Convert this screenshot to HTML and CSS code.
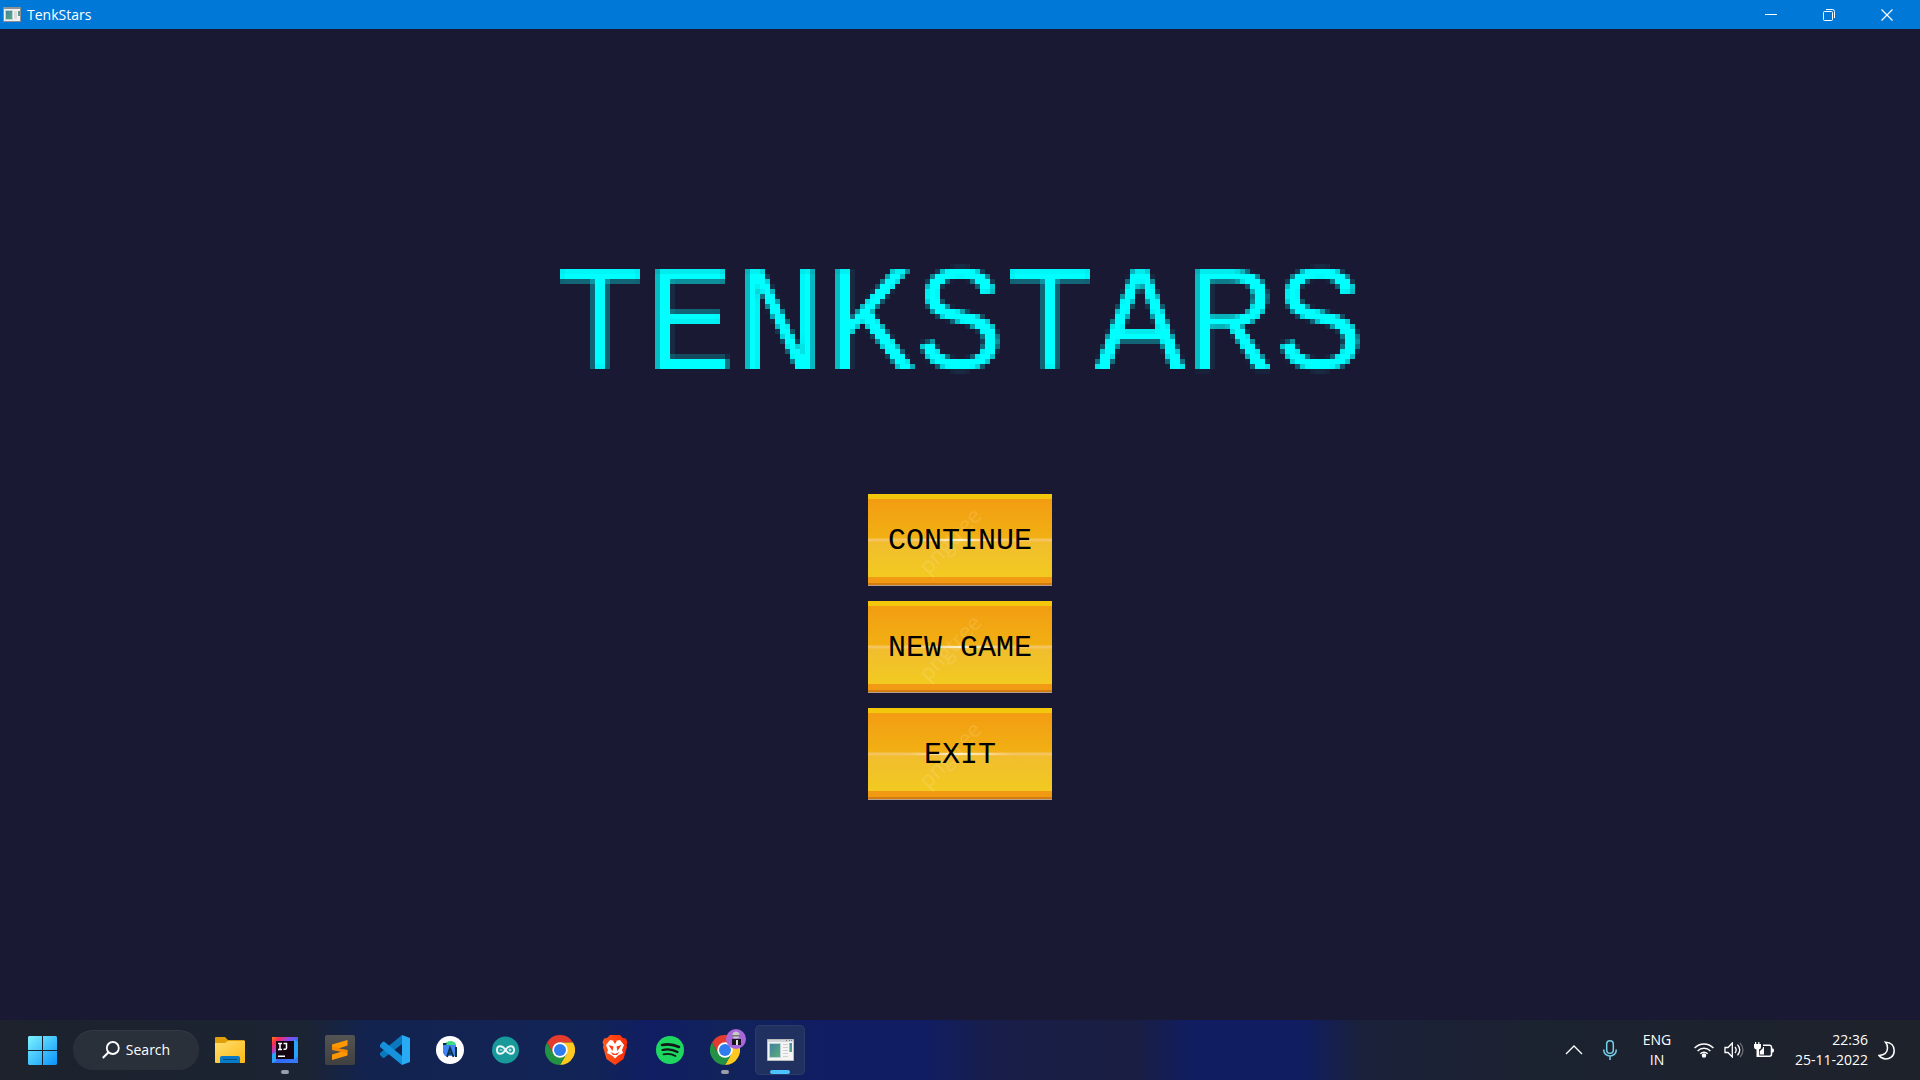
FILE: index.html
```html
<!DOCTYPE html>
<html lang="en">
<head>
<meta charset="utf-8">
<title>TenkStars</title>
<link rel="stylesheet" href="styles.css">
</head>
<body>
<svg class="defs" aria-hidden="true">
  <defs>
    <!-- Samples the title every 5px and grows each sample into a block -->
    <filter id="pixels" filterUnits="userSpaceOnUse" x="0" y="0" width="820" height="160" color-interpolation-filters="sRGB">
      <feGaussianBlur in="SourceGraphic" stdDeviation="1" result="soft"/>
      <feFlood x="2" y="2" width="1" height="1" flood-color="#000"/>
      <feComposite x="0" y="0" width="5" height="5" in2="SourceGraphic" operator="over"/>
      <feTile result="grid"/>
      <feComposite in="soft" in2="grid" operator="in"/>
      <feMorphology operator="dilate" radius="2"/>
    </filter>
    <linearGradient id="win" x1="0" y1="0" x2="1" y2="1"><stop offset="0" stop-color="#7df3ff"/><stop offset="1" stop-color="#0a93fb"/></linearGradient>
    <linearGradient id="fold" x1="0" y1="0" x2="1" y2="1"><stop offset="0" stop-color="#ffdf70"/><stop offset="1" stop-color="#fdb813"/></linearGradient>
    <linearGradient id="ij" x1="0" y1="0" x2="1" y2="1"><stop offset="0" stop-color="#f97a12"/><stop offset=".16" stop-color="#fe2857"/><stop offset=".36" stop-color="#8a4cf0"/><stop offset=".6" stop-color="#2f6bf5"/><stop offset="1" stop-color="#3b7cf8"/></linearGradient>
    <linearGradient id="subl" x1="0" y1="0" x2="0" y2="1"><stop offset="0" stop-color="#545454"/><stop offset="1" stop-color="#404040"/></linearGradient>
    <linearGradient id="brave" x1="0" y1="0" x2="1" y2="0"><stop offset="0" stop-color="#ff5a1f"/><stop offset="1" stop-color="#fb2a05"/></linearGradient>
    <linearGradient id="pane" x1="0" y1="0" x2="1" y2="1"><stop offset="0" stop-color="#3f7fa6"/><stop offset="1" stop-color="#5cae74"/></linearGradient>
    <symbol id="chrome" viewBox="0 0 30 30">
      <path fill="#e33b2e" d="M2 7.500A15 15 0 0 1 28 7.500H15L8.500 18.750Z"/>
      <path fill="#fdc921" d="M28 7.500A15 15 0 0 1 15 30L21.500 18.750L15 7.500Z"/>
      <path fill="#229342" d="M2 7.500A15 15 0 0 0 15 30L21.500 18.750H8.500Z"/>
      <circle cx="15" cy="15" r="7.700" fill="#fff"/><circle cx="15" cy="15" r="6" fill="#2f7bf0"/>
    </symbol>
    <symbol id="window" viewBox="0 0 27 22">
      <path fill="#f4f4f4" stroke="#b9bcbc" d="M.5.5h26v21H.5z"/>
      <path fill="#d3d6d8" d="M1 1h25v2H1z"/><path fill="#777" d="M19 1h1v1h-1zM22 1h1v1h-1zM24 1h1v1h-1z"/>
      <path fill="url(#pane)" stroke="#bcd3d5" d="M2.500 4.500h11v14h-11z"/>
      <path stroke="#cfcfcf" d="M16 5.500h5M16 8.500h5M16 11.500h5M16 14.500h5M16 17.500h5"/>
      <path fill="url(#pane)" d="M22.500 4H25v9h-2.500z"/>
    </symbol>
  </defs>
</svg>

<header class="titlebar">
  <svg class="titlebar-icon" viewBox="0 0 18 15" aria-hidden="true">
    <path fill="#f2f2f2" stroke="#898d8f" d="M.5.5h17v14H.5z"/><path fill="#8d9294" d="M1 0h16v2H1z"/>
    <path fill="url(#pane)" stroke="#bcd3d5" d="M2.500 3.500h7v9h-7z"/><path fill="#dcdcdc" d="M11 4h3v8h-3z"/><path fill="#5b9a8d" d="M15 4h2v5h-2z"/>
  </svg>
  <span class="titlebar-text">TenkStars</span>
  <div class="window-controls">
    <button aria-label="Minimize"><svg width="12" height="12" viewBox="0 0 12 12"><path stroke="#fff" d="M0 5.500h12"/></svg></button>
    <button aria-label="Restore"><svg width="12" height="12" viewBox="0 0 12 12" fill="none" stroke="#fff"><rect x=".5" y="2.500" width="9" height="9" rx="1"/><path d="M3 .500h6.500a2 2 0 0 1 2 2V9"/></svg></button>
    <button aria-label="Close"><svg width="12" height="12" viewBox="0 0 12 12"><path stroke="#fff" stroke-width="1.200" d="M.5.5l11 11M11.500.5l-11 11"/></svg></button>
  </div>
</header>

<main class="game">
  <h1 class="game-title">TENKSTARS</h1>
  <nav class="menu" aria-label="Main menu">
    <button class="menu-button"><span>CONTINUE</span></button>
    <button class="menu-button"><span>NEW GAME</span></button>
    <button class="menu-button"><span>EXIT</span></button>
  </nav>
</main>

<footer class="taskbar">
  <button class="task" aria-label="Start">
    <svg width="29" height="29" viewBox="0 0 29 29"><path fill="url(#win)" d="M1 0h13v14H0V1zM15 0h13l1 1v13H15zM0 15h14v14H1l-1-1zM15 15h14v13l-1 1H15z"/></svg>
  </button>
  <button class="search">
    <svg width="18" height="18" viewBox="0 0 18 18" fill="none" stroke="#fff" stroke-width="1.800"><circle cx="10.800" cy="7" r="6"/><path stroke-width="2" d="M6.500 11.300L.8 17"/></svg>
    <span>Search</span>
  </button>
  <div class="apps">
    <button class="task" aria-label="File Explorer">
      <svg width="30" height="30" viewBox="0 0 30 30"><path fill="#e0a009" d="M0 3a1 1 0 0 1 1-1h9l3 3h16l1 1v8H0z"/><path fill="url(#fold)" d="M0 8h10l3-2h17v21a1 1 0 0 1-1 1H1a1 1 0 0 1-1-1z"/><path fill="#087bc8" d="M5 28v-5a2 2 0 0 1 2-2h16a2 2 0 0 1 2 2v5z"/><path stroke="#064b80" d="M8 24.500h14"/></svg>
    </button>
    <button class="task running" aria-label="IntelliJ IDEA">
      <svg width="26" height="26" viewBox="0 0 26 26"><path fill="url(#ij)" d="M0 0h26v26H0z"/><path fill="#26a3f8" d="M22 2l4 3v14l-4 4zM0 17l4-2v9l-4 2z"/><path fill="#120511" d="M4 4h18v18H4z"/><path fill="none" stroke="#fff" stroke-width="1.500" d="M6 6.500h4M8 6.500v6M6 12.500h4M11.500 6.500h3V11q0 1.500-3 1.300M6 19.300h7"/></svg>
    </button>
    <button class="task" aria-label="Sublime Text">
      <svg width="30" height="30" viewBox="0 0 30 30"><rect width="30" height="30" rx="2" fill="url(#subl)"/><path fill="#ff9800" d="M22.500 5v5.500l-9 3L22.500 15v5.500L7 25v-5.500l9-2.700L7 15V9.500z"/><path fill="#ee7d00" d="M7 14.500v-3l15.500 4v3l-6.500-1.700z" opacity=".6"/></svg>
    </button>
    <button class="task" aria-label="Visual Studio Code">
      <svg width="30" height="30" viewBox="0 0 30 30"><path fill="#0b79be" d="M22 0v9L4 23l-1.500-.5L0 20v-2z"/><path fill="#1493dc" d="M0 10l2.500-3L4 6.500 22 21v9L0 12z"/><path fill="#29aaf4" d="M22 0l8 3v24l-8 3z"/></svg>
    </button>
    <button class="task" aria-label="Android Studio">
      <svg width="28" height="28" viewBox="0 0 28 28"><circle cx="14" cy="14" r="14" fill="#fff"/><path fill="#4285f4" d="M7 9h13v11H9L7 17z"/><path fill="#3ddc84" d="M9 9a5.500 4 0 0 1 11 0z"/><path fill="#073042" d="M7 7h4l-1 2H7zM19 11h2v10h-2z"/><path fill="none" stroke="#073042" stroke-width="1.800" d="M11 21l3-9 3.500 9M12 17.500h4"/></svg>
    </button>
    <button class="task" aria-label="Arduino IDE">
      <svg width="27" height="28" viewBox="0 0 27 28"><circle cx="13.500" cy="14" r="13.500" fill="#189a9b"/><path fill="none" stroke="#e7f6f6" stroke-width="2" d="M13.500 14c-3-5-8.500-5-8.500 0s5.500 5 8.500 0 8.500-5 8.500 0-5.500 5-8.500 0z"/><path stroke="#e7f6f6" d="M7.500 14h3M16.500 14h3M18 12.500v3"/></svg>
    </button>
    <button class="task" aria-label="Google Chrome"><svg width="30" height="30"><use href="#chrome"/></svg></button>
    <button class="task" aria-label="Brave">
      <svg width="26" height="30" viewBox="0 0 26 30"><path fill="url(#brave)" d="M8 0h10l3 3 3 .5 1.500 4L24.500 10 25 12l-3.500 12L13 30l-8.500-6L1 12l.5-2L.5 7.500 2 3.500 5 3z"/><path fill="#fff" d="M8 5l5 1 5-1 4 5-2 5 1 3-5 2.500-3 3-3-3L5 18l1-3-2-5z"/><path fill="#fc3c0d" d="M6.500 10l5 1.500-1 4.500zM19.500 10l-5 1.500 1 4.500zM11 5.800h4L13 9zM8.500 17l4.500 2 4.500-2-2.500 3h-4z"/></svg>
    </button>
    <button class="task" aria-label="Spotify">
      <svg width="28" height="28" viewBox="0 0 28 28"><circle cx="14" cy="14" r="14" fill="#1ed760"/><path fill="none" stroke="#11161a" stroke-linecap="round" stroke-width="2.600" d="M6 9q9-2 17 2"/><path fill="none" stroke="#11161a" stroke-linecap="round" stroke-width="2.200" d="M6.500 14q8-2 15 2"/><path fill="none" stroke="#11161a" stroke-linecap="round" stroke-width="1.800" d="M7.500 18.300q6.500-1.500 12 1.700"/></svg>
    </button>
    <button class="task running" aria-label="Google Chrome, profile window">
      <svg width="30" height="30"><use href="#chrome"/></svg>
      <svg class="profile" width="20" height="20" viewBox="0 0 20 20"><circle cx="10" cy="10" r="10" fill="#a867d8"/><circle cx="10" cy="6" r="3.500" fill="#c8c8cc"/><path fill="#777" d="M6 6h8v1.500H6z"/><path fill="#17151b" d="M6 10h9v6h-3v-3h-2v3H6z"/><path fill="#ddd" d="M10 11h2v5h-2z"/></svg>
    </button>
    <button class="task running active" aria-label="TenkStars"><svg width="27" height="22"><use href="#window"/></svg></button>
  </div>
  <div class="tray">
    <button class="tray-icon" aria-label="Show hidden icons"><svg width="18" height="10" viewBox="0 0 18 10"><path fill="none" stroke="#fff" stroke-width="1.300" d="M1 9l8-8 8 8"/></svg></button>
    <button class="tray-icon" aria-label="Microphone in use"><svg width="14" height="20" viewBox="0 0 14 20" fill="none" stroke="#76cfe8" stroke-width="1.500"><rect x="3.700" y=".8" width="6.600" height="12.500" rx="3.300"/><path d="M.8 9.500v1a6.200 5.500 0 0 0 12.400 0v-1M7 16v4"/></svg></button>
    <button class="tray-text language"><span>ENG</span><span>IN</span></button>
    <button class="status" aria-label="Network, volume and battery">
      <svg width="20" height="16" viewBox="0 0 20 16" fill="none" stroke="#fff" stroke-width="1.500"><path d="M.6 6a13 13 0 0 1 18.800 0M3.600 9a9 9 0 0 1 12.800 0M6.400 11.800a5 5 0 0 1 7.200 0"/><circle cx="10" cy="13.500" r="1.500" fill="#fff"/></svg>
      <svg width="20" height="16" viewBox="0 0 20 16" fill="none" stroke="#fff" stroke-width="1.300"><path d="M1 5.500h3L8.300 1v14L4 10.500H1z"/><path d="M11 5q2.400 3 0 6M13.500 2.700q4.500 5.300 0 10.600"/><path stroke="#666b73" d="M16 .8q6 7.200 0 14.400"/></svg>
      <svg width="20" height="16" viewBox="0 0 20 16"><path fill="none" stroke="#fff" stroke-width="1.500" d="M9 3.200h6.500a2 2 0 0 1 2 2v7a2 2 0 0 1-2 2H4.500V9"/><path fill="#fff" d="M18 6.500h1q1 0 1 2t-1 2h-1zM7 8q2-1 2-3h1v7.500H6V9zM1 0h1.200v2h2V0h1.200v2H7v3q0 2-2 2.500V15H2.500V7.500Q0 7 0 5V2h1z"/></svg>
    </button>
    <button class="tray-text clock"><span>22:36</span><span>25-11-2022</span></button>
    <button class="tray-icon" aria-label="Focus assist"><svg width="17" height="19" viewBox="0 0 17 19"><path fill="none" stroke="#fff" stroke-width="1.500" d="M7.500 1.200c6 .3 8.700 4 8.700 8.300 0 6.500-5 8.500-8.500 8.500-3 0-5-1.500-6.700-3.500 5-.5 8.500-3 8.500-7.500 0-2.500-.8-4.500-2-5.800z"/></svg></button>
  </div>
</footer>
</body>
</html>
```
FILE: styles.css
```css
* { box-sizing: border-box; }

body {
  margin: 0;
  min-height: 100vh;
  display: flex;
  flex-direction: column;
  background: #1a1933;
  color: #fff;
  font: 14px/20px "Open Sans", "Noto Sans", sans-serif;
}

button {
  margin: 0;
  padding: 0;
  border: 0;
  background: none;
  color: inherit;
  font: inherit;
}

svg { display: block; flex: none; }

.defs { position: absolute; width: 0; height: 0; }

/* Window title bar */
.titlebar {
  display: flex;
  align-items: center;
  height: 29px;
  padding: 0 4px 0 3px;
  background: #0078d7;
}
.titlebar-icon { width: 18px; height: 15px; }
.titlebar-text { margin-left: 6px; }
.window-controls { display: flex; align-self: stretch; margin-left: auto; }
.window-controls button { display: grid; place-items: center; width: 58px; }

/* Game screen */
.game {
  flex: 1;
  display: flex;
  flex-direction: column;
  align-items: center;
  justify-content: center;
}
.game-title {
  margin: 0 0 85px;
  color: #0ff;
  font: 150px/160px "Liberation Mono", monospace;
  filter: url(#pixels);
}
.menu { display: flex; flex-direction: column; gap: 15px; }
.menu-button {
  position: relative;
  width: 184px;
  height: 92px;
  padding-top: 2px;
  background: linear-gradient(#f3c70b 5px, #f39d12 5px, #f1b013 44px, #f6c45c 45px, #f6c45c 47px, #f1bd2e 48px, #f2ca20 83px, #f39a14 83px, #f39a14 89px, #d37c10 89px, #d37c10 91px, #b89e8c 91px);
  color: #000;
  font: 30px/36px "Liberation Mono", monospace;
}
.menu-button span { position: relative; z-index: 1; }
/* Faint diagonal mark in the button texture */
.menu-button::before {
  content: "pngtree";
  position: absolute;
  inset: 28px 22px auto 0;
  color: #fff;
  font: 22px/36px "Open Sans", sans-serif;
  opacity: 0.12;
  transform: rotate(-47deg);
}
.menu-button::after {
  content: "";
  position: absolute;
  inset: 45px 40px auto;
  height: 2px;
  background: linear-gradient(90deg, transparent, #fff0c8, transparent);
}

/* Taskbar */
.taskbar {
  display: flex;
  align-items: center;
  gap: 6px;
  height: 60px;
  padding: 0 16px 0 17px;
  background: linear-gradient(90deg, #1d222c, #1b2433 16%, #13234f 19%, #122357 31%, #101d63 34%, #12235a 38%, #101d63 43%, #101d63 48%, #181e48 52%, #1a1e42 59%, #101d60 62%, #101d60 68%, #1b2139 71%, #1b2230 80%, #1e222b);
}
.task {
  position: relative;
  display: grid;
  place-items: center;
  width: 50px;
  height: 50px;
  border-radius: 5px;
}
.search {
  display: flex;
  align-items: center;
  justify-content: center;
  gap: 6px;
  width: 126px;
  height: 40px;
  border-radius: 20px;
  background: #2a303a;
  box-shadow: inset 0 1px #343a43;
}
.apps { display: flex; gap: 5px; }
.active { background: #20305f; box-shadow: inset 0 0 0 1px #2c3b68; }
.running::after {
  content: "";
  position: absolute;
  bottom: 1px;
  left: 21px;
  width: 8px;
  height: 4px;
  border-radius: 2px;
  background: #9a9eab;
}
.active::after { left: 15px; width: 20px; background: #4cc2ff; }
.profile { position: absolute; top: 4px; right: 4px; }

.tray { display: flex; align-items: center; margin-left: auto; }
.tray-icon { display: grid; place-items: center; width: 36px; height: 40px; }
.tray-text { display: flex; flex-direction: column; }
.language { align-items: center; width: 58px; }
.status { display: flex; gap: 10px; margin: 0 8px; }
.clock { align-items: flex-end; width: 86px; }
```
